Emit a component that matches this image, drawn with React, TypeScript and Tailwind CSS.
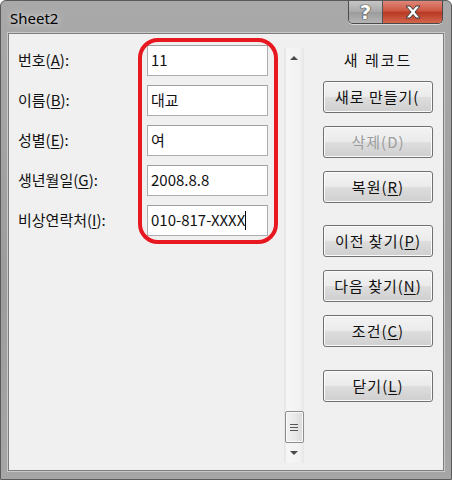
const kr = "font-['Noto_Sans_CJK_KR','Noto_Sans',sans-serif]";

function U({ children }: { children: string }) {
  return <span className="underline underline-offset-2 decoration-1">{children}</span>;
}

const fields: { label: string; key: string; value: string; caret?: boolean }[] = [
  { label: "번호", key: "A", value: "11" },
  { label: "이름", key: "B", value: "대교" },
  { label: "성별", key: "E", value: "여" },
  { label: "생년월일", key: "G", value: "2008.8.8" },
  { label: "비상연락처", key: "I", value: "010-817-XXXX", caret: true },
];

function Btn({ children, disabled, className = "" }: { children: React.ReactNode; disabled?: boolean; className?: string }) {
  return (
    <div
      className={`h-[32px] w-[110px] flex items-center justify-center rounded-[3px] border border-[#707070] shadow-[inset_0_0_0_1px_#fbfbfb] bg-[linear-gradient(to_bottom,#f3f3f3_0%,#ebebeb_48%,#dddddd_52%,#cfcfcf_100%)] text-[15px] tracking-[1px] ${disabled ? "text-[#9d9d9d]" : "text-[#111]"} ${className}`}
    >
      {children}
    </div>
  );
}

export default function App() {
  return (
    <div className="w-[452px] h-[480px] flex flex-col bg-[linear-gradient(to_bottom,#a9a9a9,#a3a3a3_30%,#9c9c9c_60%,#a6a6a6)] border border-[#5a5a5a] rounded-t-[6px] overflow-hidden">
      {/* title bar */}
      <div className="h-[32px] flex justify-between shrink-0">
        <div className="pl-[9px] pt-[6px] text-[15px] text-black font-['Noto_Sans',sans-serif] [text-shadow:0_0_8px_#d8d8d8,0_0_4px_#d0d0d0]">
          Sheet2
        </div>
        <div className="mr-[8px] flex h-[24px] -mt-px rounded-b-[5px] border border-[#4a4a4a] border-t-0 overflow-hidden shadow-[0_1px_0_#d8d8d8]">
          <div className="w-[34px] flex items-center justify-center border-r border-[#555] bg-[linear-gradient(to_bottom,#c8c8c8,#aaaaaa_50%,#9a9a9a_51%,#b4b4b4)]">
            <span className="text-[20px] font-bold text-white leading-none font-['DejaVu_Sans',sans-serif] [text-shadow:0_0_1px_#333,0_0_1px_#333,0_0_1px_#333]">?</span>
          </div>
          <div className="w-[59px] flex items-center justify-center bg-[linear-gradient(to_bottom,#e08a7d,#cf5a45_45%,#b93a24_55%,#d4664d)]">
            <svg width="20" height="16" viewBox="0 0 20 16">
              <path d="M3 2 H7 L10 5.5 L13 2 H17 L12 8 L17 14 H13 L10 10.5 L7 14 H3 L8 8 Z" fill="#fff" stroke="#3b3b3b" strokeWidth="1" strokeLinejoin="round" />
            </svg>
          </div>
        </div>
      </div>

      {/* client */}
      <div className={`relative mx-[7px] mb-[8px] flex-1 flex border border-[#7d7d7d] bg-[#f0f0f0] shadow-[0_0_0_1px_#c9c9c9] ${kr}`}>
        {/* field list */}
        <div className="w-[275px] flex flex-col gap-[9px] pt-[11px]">
          {fields.map((f) => (
            <div key={f.key} className="flex items-center h-[31px]">
              <div className="w-[138px] pl-[9px] text-[15px] text-[#111]">
                {f.label}(<U>{f.key}</U>):
              </div>
              <div className="w-[121px] h-[31px] flex items-center px-[3px] bg-white border border-[#abadb3] border-t-[#a0a0a0] text-[15px] text-[#111]">
                {f.value}
                {f.caret && <span className="inline-block w-px h-[19px] bg-black" />}
              </div>
            </div>
          ))}
        </div>

        {/* red annotation */}
        <div className="absolute left-[129px] top-[4px] w-[140px] h-[206px] rounded-[20px] border-[4px] border-[#e81820] pointer-events-none" />

        {/* scrollbar */}
        <div className="mt-[14px] w-[20px] h-[415px] flex flex-col items-center bg-[linear-gradient(to_right,#e2e2e2,#f6f6f6_15%,#f1f1f1_80%,#e6e6e6)]">
          <div className="h-[20px] w-full flex items-center justify-center">
            <div className="w-0 h-0 border-x-[4px] border-x-transparent border-b-[4px] border-b-[#4a4a4a]" />
          </div>
          <div className="flex-1" />
          <div className="w-[19px] h-[32px] rounded-[2px] border border-[#8d8d8d] bg-[linear-gradient(to_right,#f2f2f2,#e9e9e9_50%,#dadada)] shadow-[inset_0_0_0_1px_#fafafa] flex flex-col items-center justify-center gap-[2px]">
            <div className="w-[8px] h-px bg-[#555]" />
            <div className="w-[8px] h-px bg-[#555]" />
            <div className="w-[8px] h-px bg-[#555]" />
          </div>
          <div className="h-[20px] w-full flex items-center justify-center">
            <div className="w-0 h-0 border-x-[4px] border-x-transparent border-t-[4px] border-t-[#4a4a4a]" />
          </div>
        </div>

        {/* buttons */}
        <div className="ml-[19px] flex flex-col">
          <div className="mt-[14px] h-[24px] flex items-center justify-center text-[15px] text-[#111] tracking-[2px]">새 레코드</div>
          <Btn className="mt-[9px] !justify-start pl-[11px] overflow-hidden whitespace-nowrap">새로 만들기(</Btn>
          <Btn disabled className="mt-[13px]">삭제(D)</Btn>
          <Btn className="mt-[13px]">복원(<U>R</U>)</Btn>
          <Btn className="mt-[22px]">이전 찾기(<U>P</U>)</Btn>
          <Btn className="mt-[13px]">다음 찾기(<U>N</U>)</Btn>
          <Btn className="mt-[13px]">조건(<U>C</U>)</Btn>
          <Btn className="mt-[23px]">닫기(<U>L</U>)</Btn>
        </div>
      </div>
    </div>
  );
}
